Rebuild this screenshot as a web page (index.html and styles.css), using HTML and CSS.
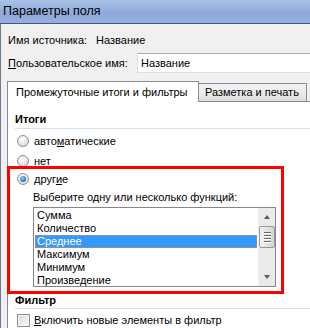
FILE: index.html
```html
<!DOCTYPE html>
<html lang="ru">
<head>
<meta charset="utf-8">
<link rel="stylesheet" href="styles.css">
</head>
<body>
<div class="window">
  <div class="titlebar">Параметры поля</div>
  <div class="body">
    <div class="row src"><span class="lbl">Имя источника:</span><span class="val">Название</span></div>
    <div class="row custom"><span class="lbl2"><u>П</u>ользовательское имя:</span><div class="input">Название</div></div>
    <div class="tabs">
      <div class="tab active">Промежуточные итоги и фильтры</div>
      <div class="tab">Разметка и печать</div>
    </div>
    <div class="panel">
      <div class="heading">Итоги</div>
      <div class="sep"></div>
      <div class="opt first"><span class="radio"></span><span>авто<u>м</u>атические</span></div>
      <div class="opt"><span class="radio"></span><span><u>н</u>ет</span></div>
      <div class="opt other"><span class="radio on"></span><span>друг<u>и</u>е</span></div>
      <div class="hint">Выберите одну или несколько функций:</div>
      <div class="listbox">
        <div class="items">
          <div class="item">Сумма</div>
          <div class="item">Количество</div>
          <div class="item sel">Среднее</div>
          <div class="item">Максимум</div>
          <div class="item">Минимум</div>
          <div class="item">Произведение</div>
        </div>
        <div class="scroll">
          <div class="arrow up"></div>
          <div class="thumb"><i></i><i></i><i></i><i></i></div>
          <div class="track"></div>
          <div class="arrow down"></div>
        </div>
      </div>
      <div class="heading filter">Фильтр</div>
      <div class="sep"></div>
      <div class="opt chk"><span class="checkbox"></span><span><u>В</u>ключить новые элементы в фильтр</span></div>
    </div>
  </div>
  <div class="highlight"></div>
</div>
</body>
</html>
```
FILE: styles.css
```css
* { box-sizing: border-box; }
html, body { margin: 0; padding: 0; }
body {
  width: 310px; height: 328px; overflow: hidden;
  font-family: "Liberation Sans", Arial, sans-serif;
  font-size: 11px; color: #000; background: #f0f0f0;
  white-space: nowrap;
}
u { text-decoration: underline; text-underline-offset: 1px; }
.window { position: relative; width: 310px; height: 328px; }
.titlebar {
  height: 24px; padding-left: 3px; line-height: 22px; font-size: 12.5px;
  background: linear-gradient(#a8c1e6, #8ea9da 60%, #95b0dd);
  border-bottom: 1px solid #4b5872;
}
.body { border-left: 1px solid #6d7a90; height: 304px; }
.row { display: flex; align-items: center; padding-left: 7px; }
.src { height: 29px; padding-top: 2px; }
.src .val { margin-left: 9px; }
.custom { height: 20px; }
.lbl2 { width: 129px; }
.input {
  flex: 1; height: 20px; background: #fff; line-height: 18px;
  border-top: 1px solid #ababab; border-bottom: 1px solid #dedede; border-left: 1px solid #dedede;
  padding-left: 3px;
}
.tabs { display: flex; align-items: flex-end; margin-top: 8px; padding-left: 6px; height: 20px; }
.tab {
  height: 18px; line-height: 17px; width: 108px; padding-left: 6px;
  border: 1px solid #898c95; border-bottom: none; border-left: none;
  background: linear-gradient(#f2f2f2, #ebebeb 50%, #dddddd);
}
.tab.active {
  width: 192px; height: 21px; line-height: 20px; background: #fff; border-left: 1px solid #898c95;
  padding-left: 8px; margin-bottom: -1px; position: relative; z-index: 1;
}
.panel {
  margin-left: 6px; background: #fff; height: 240px;
  border-left: 1px solid #898c95; border-top: 1px solid #898c95;
  padding-left: 7px;
}
.heading { font-weight: bold; height: 16px; line-height: 16px; margin-top: 9px; }
.sep { height: 1px; background: #d5dfe5; margin-top: 1px; }
.opt { display: flex; align-items: center; height: 20px; }
.opt.first { margin-top: 2px; }
.radio {
  width: 12px; height: 12px; border-radius: 50%; margin: 0 5px 0 2px;
  border: 1px solid #8f9192;
  background: radial-gradient(circle at 40% 35%, #ffffff, #e6e6e6 55%, #c9c9c9);
  display: inline-flex; align-items: center; justify-content: center;
}
.radio.on::after {
  content: ""; width: 6px; height: 6px; border-radius: 50%;
  background: radial-gradient(circle at 40% 35%, #9fd3fb, #2a7fc8 60%, #174f8e);
}
.other { margin-top: -2px; }
.hint { padding-left: 18px; height: 18px; line-height: 17px; }
.listbox {
  margin-left: 18px; width: 243px; height: 80px; display: flex;
  border: 1px solid #828790; background: #fff;
}
.items { flex: 1; padding: 1px 0 0 1px; }
.item { height: 13px; line-height: 13px; padding-left: 2px; }
.item.sel {
  background: #3399ff; color: #fff; outline: 1px dotted #e08a2a; outline-offset: -1px;
  margin-right: 1px;
}
.scroll {
  width: 17px; display: flex; flex-direction: column; background: #eaeaea;
  border-left: 1px solid #f2f2f2;
}
.arrow { height: 17px; position: relative; }
.arrow::after {
  content: ""; position: absolute; left: 5px; width: 0; height: 0;
  border-left: 3.5px solid transparent; border-right: 3.5px solid transparent;
}
.arrow.up::after { top: 7px; border-bottom: 4px solid #5b5b5b; }
.arrow.down::after { top: 6px; border-top: 4px solid #5b5b5b; }
.thumb {
  height: 22px; margin: 1px 0; border: 1px solid #979797; border-radius: 2px;
  background: linear-gradient(90deg, #f3f3f3, #e2e2e2 50%, #d4d4d4);
  display: flex; flex-direction: column; align-items: center; justify-content: center; gap: 1px;
}
.thumb i { display: block; width: 7px; background: #6a6a6a; border-bottom: 1px solid #fff; height: 2px; }
.track { flex: 1; }
.heading.filter { margin-top: 5px; height: 15px; line-height: 17px; }
.chk { margin-top: 1px; }
.checkbox {
  width: 13px; height: 13px; margin: 0 4px 0 2px; border: 1px solid #8f8f8f;
  background: linear-gradient(135deg, #dcdcdc, #f6f6f6);
  box-shadow: inset 0 0 0 1px #f4f4f4;
}
.highlight {
  position: absolute; left: 7px; top: 166px; width: 277px; height: 128px;
  border: 3px solid #ff0000; pointer-events: none;
}
```
